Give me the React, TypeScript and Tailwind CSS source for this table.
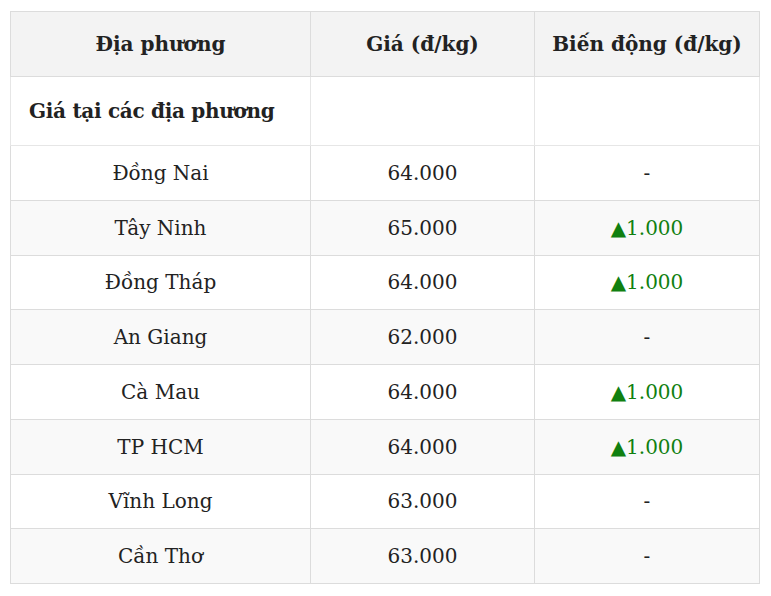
const rows: { place: string; price: string; change: string | null }[] = [
  { place: 'Đồng Nai', price: '64.000', change: null },
  { place: 'Tây Ninh', price: '65.000', change: '1.000' },
  { place: 'Đồng Tháp', price: '64.000', change: '1.000' },
  { place: 'An Giang', price: '62.000', change: null },
  { place: 'Cà Mau', price: '64.000', change: '1.000' },
  { place: 'TP HCM', price: '64.000', change: '1.000' },
  { place: 'Vĩnh Long', price: '63.000', change: null },
  { place: 'Cần Thơ', price: '63.000', change: null },
]

export default function App() {
  return (
    <div
      className="bg-white w-[771px] h-[596px] pt-[11px] pl-[10px] text-[#222]"
      style={{ fontFamily: '"DejaVu Serif", "Liberation Serif", serif' }}
    >
      <table className="w-[749px] border-collapse text-[20px] table-fixed">
        <colgroup>
          <col className="w-[300px]" />
          <col className="w-[224px]" />
          <col className="w-[225px]" />
        </colgroup>
        <thead>
          <tr className="h-[65px] bg-[#f3f3f3]">
            <th className="border border-[#dcdcdc] font-bold text-center">Địa phương</th>
            <th className="border border-[#dcdcdc] font-bold text-center">Giá (đ/kg)</th>
            <th className="border border-[#dcdcdc] font-bold text-center">Biến động (đ/kg)</th>
          </tr>
        </thead>
        <tbody>
          <tr className="h-[69px] bg-white">
            <td className="border border-[#e6e6e6] font-bold text-left pl-[18px] tracking-[-0.3px]">
              Giá tại các địa phương
            </td>
            <td className="border border-[#e6e6e6]"></td>
            <td className="border border-[#e6e6e6]"></td>
          </tr>
          {rows.map((r, i) => (
            <tr key={r.place} className={`h-[54.75px] ${i % 2 === 1 ? 'bg-[#f9f9f9]' : 'bg-white'}`}>
              <td className="border border-[#dcdcdc] text-center">{r.place}</td>
              <td className="border border-[#dcdcdc] text-center">{r.price}</td>
              <td className="border border-[#dcdcdc] text-center">
                {r.change ? <span className="text-[#108010]">▲{r.change}</span> : '-'}
              </td>
            </tr>
          ))}
        </tbody>
      </table>
    </div>
  )
}
